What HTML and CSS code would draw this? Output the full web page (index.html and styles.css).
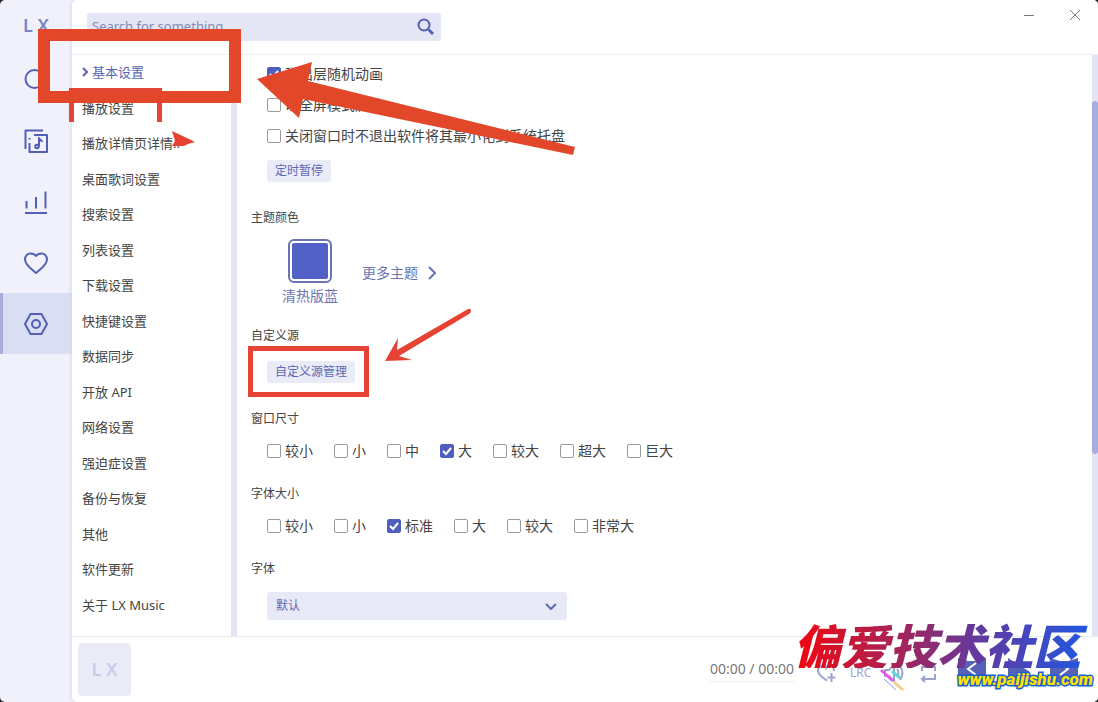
FILE: index.html
```html
<!DOCTYPE html>
<html lang="zh-CN">
<head>
<meta charset="utf-8">
<title>LX Music</title>
<link rel="stylesheet" href="styles.css">
</head>
<body>
<div class="app">
  <aside class="sidebar">
    <div class="logo">L X</div>
    <a class="side-link" href="#search" aria-label="搜索"><svg viewBox="0 0 24 24"><circle cx="10.500" cy="11" r="9"/><path d="M17 18l5 5"/></svg></a>
    <a class="side-link" href="#songlist" aria-label="歌单"><svg viewBox="0 0 24 24"><path d="M1.500 20V1.500H19M5.500 14v9H23V6H10M5.500 10.500V9"/><path d="M15 17V9c.5 2 3 2 3 4"/><circle cx="13" cy="17.500" r="1.800"/></svg></a>
    <a class="side-link" href="#ranking" aria-label="排行榜"><svg viewBox="0 0 24 24"><path d="M1 23h22M2.500 11v7.500M12 7v11.500M21.500 1.500v17"/></svg></a>
    <a class="side-link" href="#love" aria-label="收藏"><svg viewBox="0 0 24 24"><path d="M12 22C8 18.500 1 14 1 8.500 1 5 3.500 2.500 6.500 2.500c2.500 0 4.500 1 5.500 2.500 1-1.500 3-2.500 5.500-2.500C20.500 2.500 23 5 23 8.500 23 14 16 18.500 12 22z"/></svg></a>
    <a class="side-link active" href="#setting" aria-label="设置"><svg viewBox="0 0 24 24"><path d="M6.500 2h11L23 12l-5.500 10h-11L1 12z"/><circle cx="12" cy="12" r="4"/></svg></a>
  </aside>
  <div class="main">
    <header class="topbar">
      <form class="search">
        <input type="text" aria-label="Search" placeholder="Search for something...">
        <button type="button" aria-label="Search"><svg viewBox="0 0 18 18"><circle cx="7" cy="7" r="5.500"/><path class="handle" d="M11.500 11.500L16 16"/></svg></button>
      </form>
      <div class="window-buttons">
        <button type="button" aria-label="最小化"><svg viewBox="0 0 12 12"><path d="M1 6.500h10"/></svg></button>
        <button type="button" aria-label="关闭"><svg viewBox="0 0 12 12"><path d="M1 1l10 10M11 1L1 11"/></svg></button>
      </div>
    </header>
    <div class="body">
      <nav class="toc">
        <a class="current" href="#basic"><svg viewBox="0 0 6 10"><path d="M1 1l4 4-4 4"/></svg>基本设置</a>
        <a href="#play">播放设置</a>
        <a href="#detail">播放详情页详情..</a>
        <a href="#lyric">桌面歌词设置</a>
        <a href="#find">搜索设置</a>
        <a href="#list">列表设置</a>
        <a href="#download">下载设置</a>
        <a href="#hotkey">快捷键设置</a>
        <a href="#sync">数据同步</a>
        <a href="#api">开放 API</a>
        <a href="#network">网络设置</a>
        <a href="#odc">强迫症设置</a>
        <a href="#backup">备份与恢复</a>
        <a href="#other">其他</a>
        <a href="#update">软件更新</a>
        <a href="#about">关于 LX Music</a>
      </nav>
      <div class="track"></div>
      <main class="content">
        <section class="stack">
          <label class="check"><input type="checkbox" checked>弹出层随机动画</label>
          <label class="check"><input type="checkbox">以全屏模式启动</label>
          <label class="check"><input type="checkbox">关闭窗口时不退出软件将其最小化到系统托盘</label>
          <button class="btn" type="button">定时暂停</button>
        </section>
        <section>
          <h2>主题颜色</h2>
          <div class="themes">
            <button class="theme" type="button"><span class="swatch"></span>清热版蓝</button>
            <a class="more" href="#themes">更多主题<svg viewBox="0 0 8 14"><path d="M1 1l6 6-6 6"/></svg></a>
          </div>
        </section>
        <section class="source">
          <h2>自定义源</h2>
          <button class="btn" type="button">自定义源管理</button>
        </section>
        <section>
          <h2>窗口尺寸</h2>
          <div class="options">
            <label class="check"><input type="checkbox">较小</label>
            <label class="check"><input type="checkbox">小</label>
            <label class="check"><input type="checkbox">中</label>
            <label class="check"><input type="checkbox" checked>大</label>
            <label class="check"><input type="checkbox">较大</label>
            <label class="check"><input type="checkbox">超大</label>
            <label class="check"><input type="checkbox">巨大</label>
          </div>
        </section>
        <section>
          <h2>字体大小</h2>
          <div class="options">
            <label class="check"><input type="checkbox">较小</label>
            <label class="check"><input type="checkbox">小</label>
            <label class="check"><input type="checkbox" checked>标准</label>
            <label class="check"><input type="checkbox">大</label>
            <label class="check"><input type="checkbox">较大</label>
            <label class="check"><input type="checkbox">非常大</label>
          </div>
        </section>
        <section>
          <h2>字体</h2>
          <div class="select-box">
            <select aria-label="字体"><option>默认</option></select>
            <svg viewBox="0 0 12 7"><path d="M1 1l5 5 5-5"/></svg>
          </div>
        </section>
      </main>
      <div class="track"><div class="thumb"></div></div>
    </div>
    <footer class="player">
      <div class="cover">L X</div>
      <div class="time">00:00 / 00:00</div>
      <div class="tools">
        <button type="button" aria-label="添加到收藏"><svg viewBox="0 0 20 20"><path d="M11 17.500C7 15 2 12 2 7.500 2 2 8.500 1 10 5c1.500-4 8-3 8 3M15.500 10v9M11.500 14.500h8"/></svg></button>
        <button type="button">LRC</button>
        <button type="button" aria-label="音量"><svg viewBox="0 0 20 20"><path d="M1 7h4l5-5v16l-5-5H1zM13 6q3 4 0 8M16 3q5 7 0 14"/></svg></button>
        <button type="button" aria-label="循环"><svg viewBox="0 0 20 20"><path d="M4 8V4h13v4M17 11v5H4M7 13l-3 3 3 3"/></svg></button>
      </div>
      <div class="controls">
        <button type="button" aria-label="上一首"><svg viewBox="0 0 28 24"><path d="M0 0l10 3h8l10-3v24H0z"/><path class="cut" d="M18 5l-8 6 8 6"/></svg></button>
        <button type="button" aria-label="播放"><svg viewBox="0 0 28 24"><path d="M4 0l22 14-14 10H4z"/></svg></button>
        <button type="button" aria-label="下一首"><svg viewBox="0 0 28 24"><path d="M0 0l10 3h8l10-3v24H0z"/><path class="cut" d="M10 5l8 6-8 6"/></svg></button>
      </div>
    </footer>
  </div>
</div>
<svg class="marks" viewBox="0 0 1098 702" aria-hidden="true">
  <path class="mark-b" d="M69 88h93v34h-5V96H74v26h-5z"/>
  <path class="mark-b" d="M172 131l17 8 6 3-7 2-4 2h-12l3-5z"/>
  <path class="mark-a" fill-rule="evenodd" d="M38 29h203v74H38zM50 41v50h179V41z"/>
  <path class="mark-a" d="M257 79l55-17-4 19 267 66-2 8-270-56-4 19z"/>
  <path class="mark-b" fill-rule="evenodd" d="M248 346h121v51H248zM253 351v41h111v-41z"/>
  <path class="mark-b" d="M385 361l13-23-1 12 71-41q3-1 3 2 0 2-2 3l-70 42 13 4z"/>
</svg>
<div class="watermark">
  <div class="wm-title">偏爱技术社区</div>
  <div class="wm-url">www.paijishu.com</div>
  <svg class="wm-pencil" viewBox="0 0 28 28"><path stroke="#e45be8" d="M2 4l12 11"/><path stroke="#f8cc88" d="M15 16l9 8"/><path stroke="#62d8d8" d="M13 5l8 7"/><path stroke="#7aa0f0" stroke-width="1" d="M5 13l12 11"/></svg>
</div>
</body>
</html>
```
FILE: styles.css
```css
* { box-sizing: border-box; }
body {
  margin: 0;
  background: #222;
  color: #444;
  font-family: "Noto Sans", "Noto Sans CJK SC", sans-serif;
  font-size: 13px;
  line-height: 20px;
}
a { color: inherit; text-decoration: none; }
button, input, select { font: inherit; color: inherit; border: 0; margin: 0; padding: 0; background: none; }
button { cursor: pointer; }
svg { display: block; fill: none; stroke: currentColor; }

.app { display: flex; height: 100vh; background: #f0f1fb; border-radius: 5px; overflow: hidden; }

.sidebar { width: 72px; flex: none; color: #515fb5; }
.logo { height: 49px; line-height: 50px; text-align: center; font-size: 18px; font-weight: 600; color: #7a84c4; }
.side-link { display: flex; align-items: center; justify-content: center; height: 61px; }
.side-link svg { width: 24px; height: 24px; stroke-width: 2; stroke-linejoin: round; }
.side-link.active { background: #d9def2; border-left: 3px solid #aaacdc; padding-right: 3px; }

.main { flex: 1; min-width: 0; display: flex; flex-direction: column; background: #fff; border-radius: 5px 0 0 5px; box-shadow: 0 0 4px #ccd0e4; }

.topbar { flex: none; height: 55px; display: flex; justify-content: space-between; padding: 13px 17px 0 15px; border-bottom: 1px solid #eceef4; }
.search { display: flex; width: 354px; height: 28px; background: #e4e6f5; border-radius: 3px; color: #5462b4; }
.search input { flex: 1; min-width: 0; padding: 0 5px 2px; outline: 0; font-size: 13px; }
.search input::placeholder { color: #8088b8; opacity: 1; }
.search button { width: 31px; padding-left: 7px; }
.search svg { width: 18px; height: 18px; stroke-width: 2; }
.search .handle { stroke-width: 3; }
.window-buttons { display: flex; gap: 34px; align-items: flex-start; color: #777; margin-top: -4px; }
.window-buttons svg { width: 12px; height: 12px; }

.body { flex: 1; min-height: 0; display: flex; }
.toc { width: 159px; flex: none; padding: 7px 0 21px 10px; display: flex; flex-direction: column; justify-content: space-between; }
.toc a { white-space: nowrap; }
.toc .current { display: flex; align-items: center; gap: 4px; color: #5865b2; }
.toc svg { width: 6px; height: 10px; stroke-width: 2; }
.track { width: 6px; flex: none; background: #e3e5f4; padding-top: 46px; }
.thumb { height: 66%; border-radius: 3px; background: #a7ade0; }

.content { flex: 1; min-width: 0; overflow: hidden; padding: 9px 14px 0; display: flex; flex-direction: column; gap: 23px; }
.content h2 { margin: 0; font-size: 12px; font-weight: 400; line-height: 20px; }
.stack { display: flex; flex-direction: column; align-items: flex-start; gap: 11px; padding: 0 0 3px 16px; }
.stack .btn { margin-top: 3px; }
.check { display: flex; align-items: center; gap: 4px; font-size: 14px; line-height: 20px; }
.check input { appearance: none; width: 14px; height: 14px; border: 1px solid #999; border-radius: 2px; background: #fff; }
.check input:checked { border-color: #505fbd; background: #505fbd url("data:image/svg+xml,%3Csvg xmlns='http://www.w3.org/2000/svg' viewBox='0 0 12 12'%3E%3Cpath d='M2 6l3 3 5-6' fill='none' stroke='white' stroke-width='2'/%3E%3C/svg%3E") center / 12px 12px no-repeat; }
.btn { height: 22px; padding: 0 8px; border-radius: 3px; background: #e9ebf7; color: #5c69b4; font-size: 12px; line-height: 22px; }
.themes { display: flex; align-items: center; gap: 24px; margin-bottom: -3px; padding: 11px 0 0 31px; color: #6974b4; font-size: 14px; }
.theme { display: flex; flex-direction: column; align-items: center; gap: 3px; }
.swatch { width: 44px; height: 44px; padding: 2px; border: 2px solid #6974b4; border-radius: 6px; background: #5161c8 content-box; }
.more { display: flex; align-items: center; gap: 10px; }
.more svg { width: 8px; height: 14px; stroke-width: 2; }
.source { margin-bottom: 3px; }
.source .btn { display: block; margin: 15px 0 0 16px; }
.options { display: flex; flex-wrap: wrap; gap: 21px; padding: 12px 0 0 16px; }
.select-box { display: grid; align-items: center; width: 300px; height: 28px; margin: 13px 0 0 16px; border-radius: 3px; background: #e7e9f6; color: #5c69b4; }
.select-box select, .select-box svg { grid-area: 1 / 1; }
.select-box select { appearance: none; width: 100%; height: 28px; padding-left: 9px; font-size: 12px; }
.select-box svg { justify-self: end; margin-right: 10px; width: 12px; height: 7px; stroke-width: 2; pointer-events: none; }

.player { flex: none; height: 66px; display: flex; align-items: center; padding: 0 20px 0 6px; border-top: 1px solid #e8eaf2; }
.cover { width: 53px; height: 53px; border-radius: 4px; background: #ebebf8; color: #c9cbe9; font-size: 18px; font-weight: 600; line-height: 53px; text-align: center; }
.time { margin-left: auto; padding: 2px 0; border-bottom: 1px solid #eee; color: #777; font-size: 14px; }
.tools { display: flex; gap: 14px; margin: 6px 0 0 22px; color: #9da3cf; font-size: 12px; }
.tools button { width: 20px; height: 20px; }
.tools svg { width: 20px; height: 20px; stroke-width: 2; }
.controls { display: flex; gap: 18px; margin-left: 20px; color: #5562b8; }
.controls svg { width: 28px; height: 24px; fill: currentColor; stroke: none; }
.controls .cut { fill: none; stroke: #fff; stroke-width: 2; }

.marks { position: absolute; left: 0; top: 0; width: 1098px; height: 702px; pointer-events: none; stroke: none; }
.mark-a { fill: #e2472a; }
.mark-b { fill: #e54334; }
.watermark { position: absolute; right: 5px; bottom: 13px; pointer-events: none; display: flex; flex-direction: column; align-items: flex-end; font-style: italic; font-weight: 900; }
.wm-title { padding-right: 12px; font-family: "Noto Sans CJK SC", sans-serif; font-size: 48px; line-height: 48px; background: linear-gradient(90deg, #f2060e, #a62458 35%, #66389c 60%, #1c58e6); background-clip: text; -webkit-background-clip: text; color: transparent; }
.wm-url { margin-top: 1px; font-family: Roboto, sans-serif; font-size: 17px; line-height: 20px; color: #ffe100; -webkit-text-stroke: 3px #1c5fd0; paint-order: stroke fill; }
.wm-pencil { position: absolute; right: 186px; bottom: -5px; width: 28px; height: 28px; stroke-width: 3; }
```
